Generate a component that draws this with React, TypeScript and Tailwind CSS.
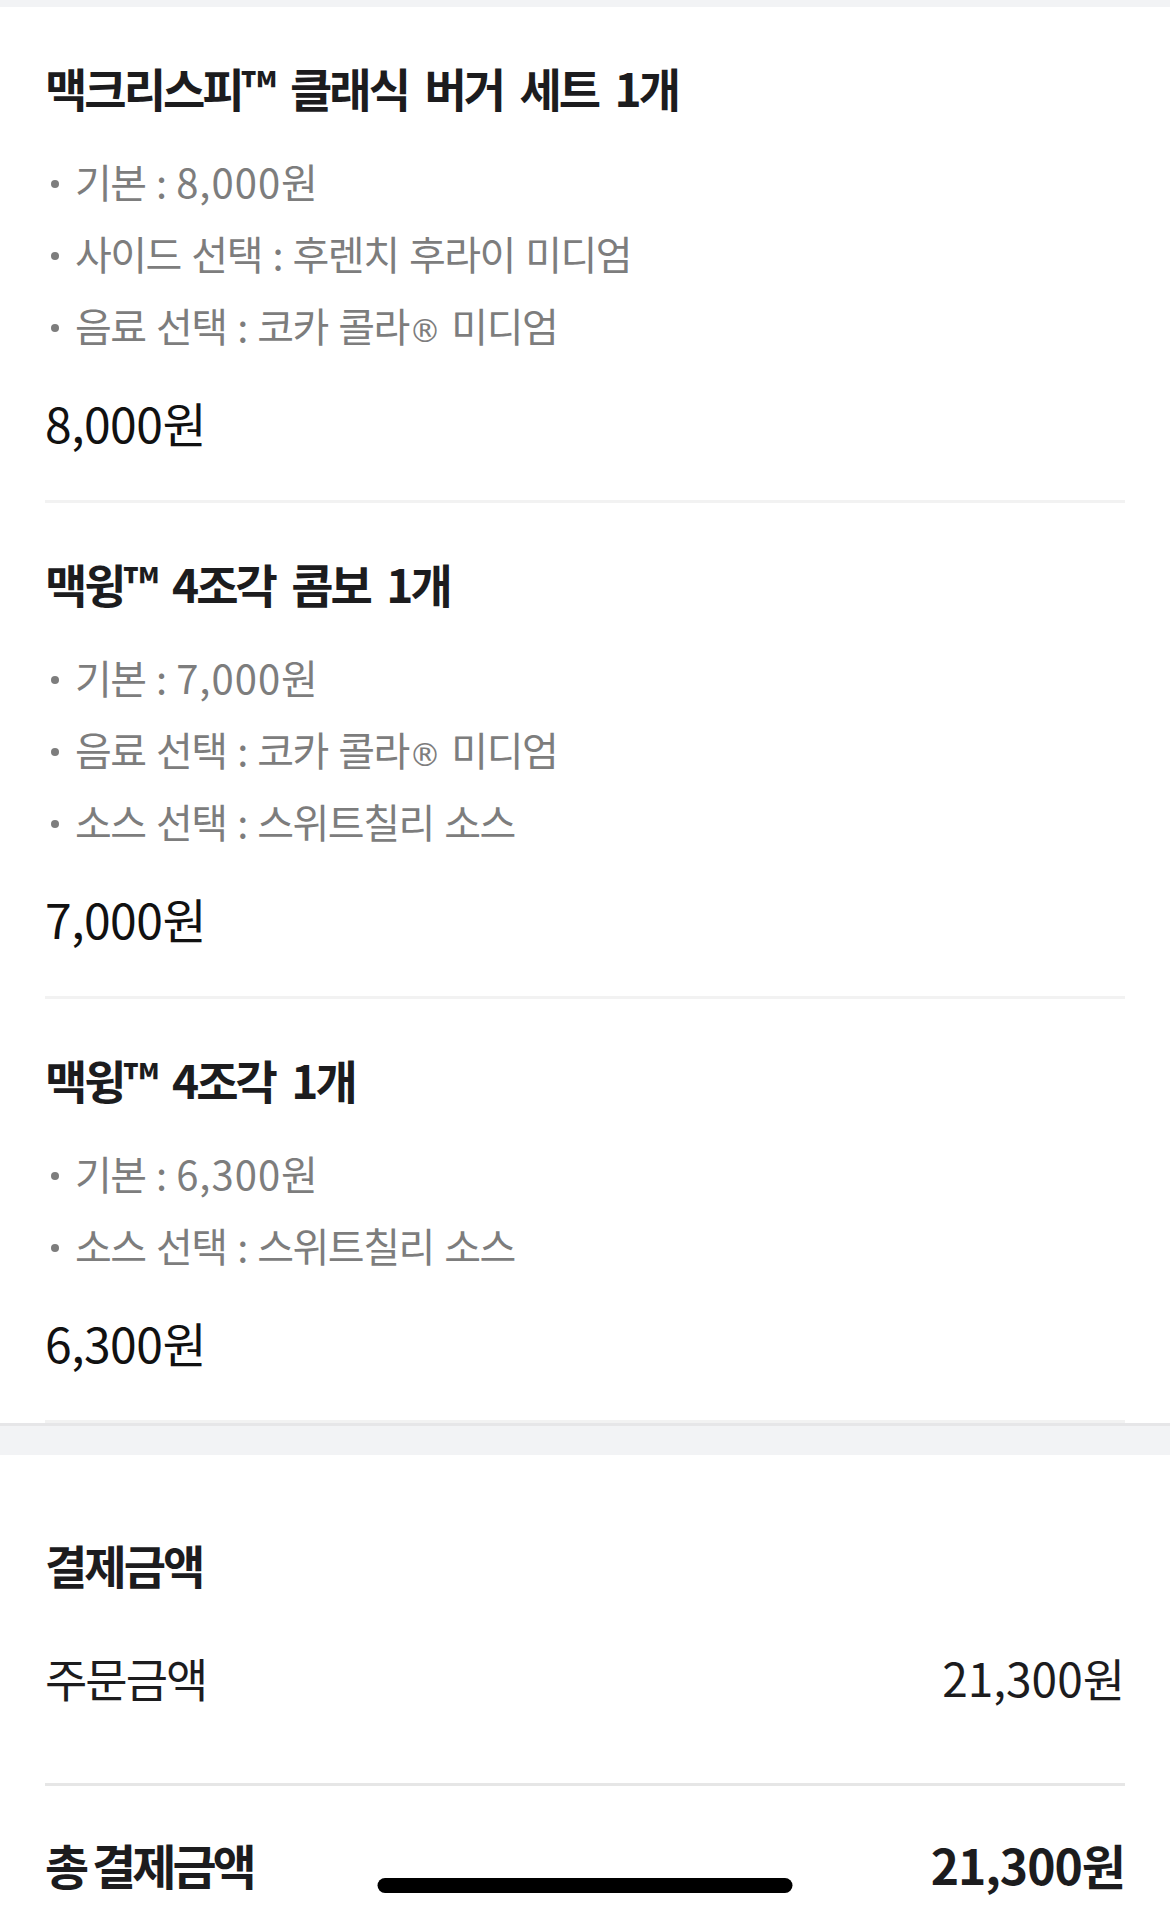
import React from 'react'

type Item = {
  name: string
  options: string[]
  price: string
}

const items: Item[] = [
  {
    name: '맥크리스피™ 클래식 버거 세트 1개',
    options: ['기본 : 8,000원', '사이드 선택 : 후렌치 후라이 미디엄', '음료 선택 : 코카 콜라® 미디엄'],
    price: '8,000원',
  },
  {
    name: '맥윙™ 4조각 콤보 1개',
    options: ['기본 : 7,000원', '음료 선택 : 코카 콜라® 미디엄', '소스 선택 : 스위트칠리 소스'],
    price: '7,000원',
  },
  {
    name: '맥윙™ 4조각 1개',
    options: ['기본 : 6,300원', '소스 선택 : 스위트칠리 소스'],
    price: '6,300원',
  },
]

function Option({ text }: { text: string }) {
  const [label, value] = text.split(' : ')
  const isNumber = /^\d/.test(value)
  const parts = value.split('®')

  return (
    <li className="flex items-center h-[72px] text-[40px] text-[#7d7d7d] tracking-[-1.5px] [word-spacing:3px] whitespace-pre">
      <span className="w-[8px] h-[8px] rounded-full bg-[#7d7d7d] ml-[6px] mr-[16px] mt-[5px]" />
      {label} :{' '}
      <span className={isNumber ? 'tracking-[1px]' : ''}>
        {parts.map((p, i) => (
          <React.Fragment key={i}>
            {i > 0 && <span className="font-['DejaVu_Sans'] text-[32px] tracking-normal">®</span>}
            {p}
          </React.Fragment>
        ))}
      </span>
    </li>
  )
}

function OrderItem({ item }: { item: Item }) {
  return (
    <div className="border-b-[3px] border-[#f2f2f2] pt-[50px] pb-[48px]">
      <div className="text-[46px] leading-[60px] font-bold text-[#1c1c1e] tracking-[-3px] [word-spacing:9px]">
        {item.name}
      </div>
      <ul className="mt-[28px]">
        {item.options.map((opt) => (
          <Option key={opt} text={opt} />
        ))}
      </ul>
      <div className="mt-[31px] text-[48px] leading-[60px] text-[#111] tracking-[-0.5px]">{item.price}</div>
    </div>
  )
}

export default function App() {
  return (
    <div className="relative h-[1916px] overflow-hidden bg-white font-['Noto_Sans_CJK_KR','Noto_Sans',sans-serif]">
      <div className="h-[7px] bg-[#f2f3f5]" />
      <section className="px-[45px]">
        {items.map((item) => (
          <OrderItem key={item.name} item={item} />
        ))}
      </section>
      <div className="h-[32px] bg-[#f2f3f5] border-t-[3px] border-[#e6e6e8]" />
      <section className="px-[45px]">
        <div className="pt-[79px] text-[46px] leading-[60px] font-bold text-[#1c1c1e] tracking-[-3px]">결제금액</div>
        <div className="mt-[53px] pb-[76px] flex justify-between text-[46px] leading-[60px] text-[#1c1c1e]">
          <span className="tracking-[-2px]">주문금액</span>
          <span className="tracking-[0px]">21,300원</span>
        </div>
        <div className="h-[3px] bg-[#e6e6e6]" />
        <div className="mt-[48px] flex justify-between text-[48px] leading-[60px] font-bold text-[#1c1c1e]">
          <span className="tracking-[-4px]">총 결제금액</span>
          <span className="tracking-[-1px]">21,300원</span>
        </div>
      </section>
      <div className="absolute bottom-[23px] left-1/2 -translate-x-1/2 w-[415px] h-[15px] rounded-full bg-black" />
    </div>
  )
}
